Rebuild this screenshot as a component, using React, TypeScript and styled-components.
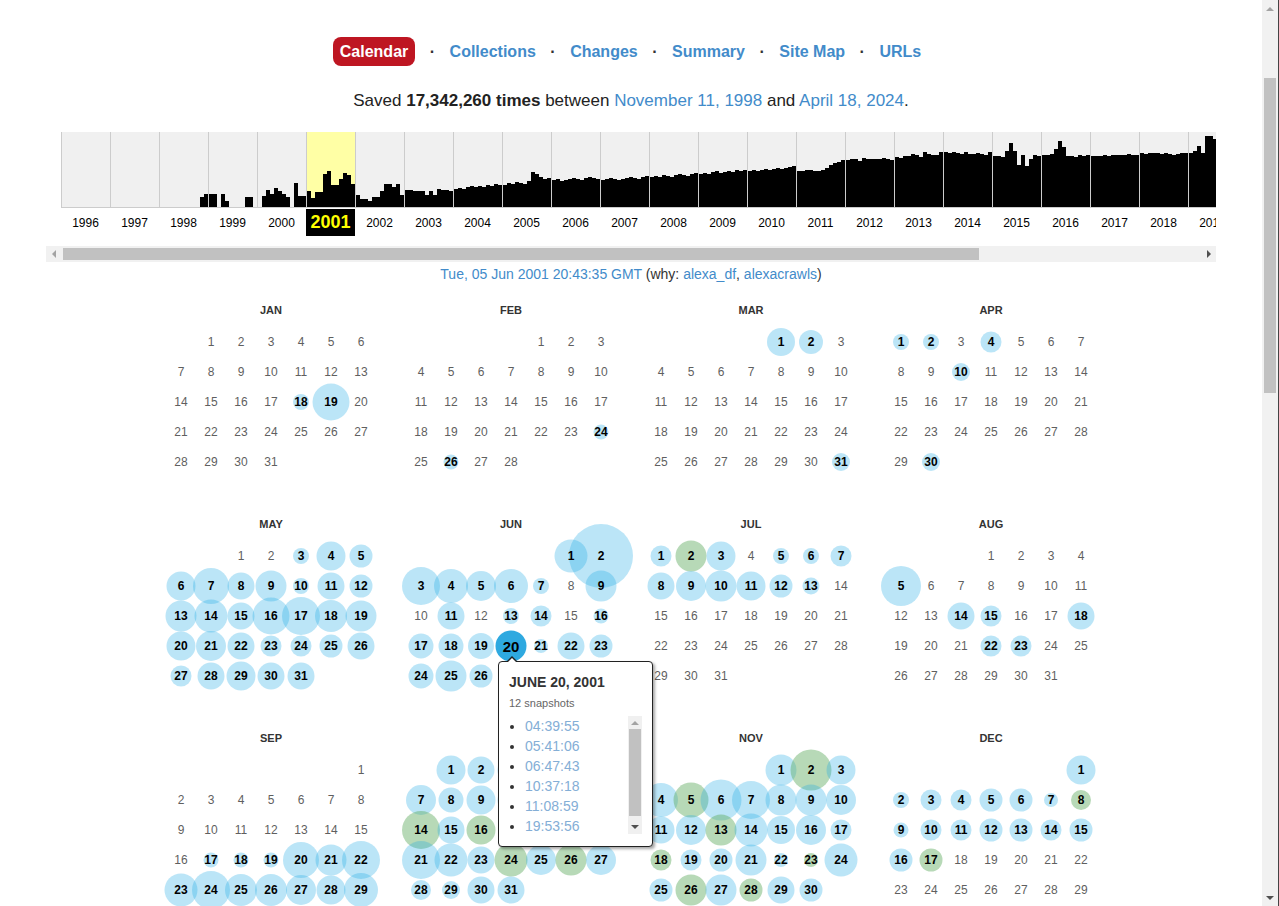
import React from "react";
import styled, { createGlobalStyle } from "styled-components";

const GlobalStyle = createGlobalStyle`
  body {
    margin: 0;
    background: #fff;
    color: #222;
    font-family: "Liberation Sans", Arial, sans-serif;
  }
`;

const BLUE = "#428bca";

// monthly capture heights per year, 1996 onwards
const spark: number[][] = [
  [0, 0, 0, 0, 0, 0, 0, 0, 0, 0, 0, 0],
  [0, 0, 0, 0, 0, 0, 0, 0, 0, 0, 0, 0],
  [0, 0, 0, 0, 0, 0, 0, 0, 0, 0, 10, 13],
  [13, 13, 0, 13, 6, 0, 0, 0, 0, 10, 10, 0],
  [0, 11, 17, 13, 19, 16, 13, 10, 0, 24, 11, 11],
  [16, 9, 15, 15, 33, 36, 22, 22, 28, 34, 32, 23],
  [12, 8, 8, 6, 10, 10, 16, 23, 23, 20, 23, 12],
  [17, 17, 16, 16, 16, 12, 16, 12, 18, 17, 17, 16],
  [18, 19, 18, 20, 21, 20, 21, 20, 22, 21, 23, 22],
  [22, 24, 23, 25, 24, 23, 26, 35, 33, 30, 28, 29],
  [27, 28, 26, 27, 28, 29, 28, 27, 29, 30, 29, 28],
  [27, 28, 29, 28, 27, 28, 29, 30, 29, 28, 30, 31],
  [30, 31, 30, 32, 31, 30, 32, 33, 32, 31, 33, 34],
  [33, 34, 33, 35, 36, 34, 35, 36, 35, 37, 36, 37],
  [36, 37, 36, 37, 38, 37, 38, 39, 38, 39, 40, 41],
  [36, 36, 37, 37, 36, 36, 37, 39, 42, 44, 45, 47],
  [47, 48, 48, 46, 49, 48, 48, 48, 48, 49, 48, 47],
  [50, 49, 51, 51, 53, 52, 50, 55, 53, 52, 52, 55],
  [55, 54, 55, 54, 53, 55, 53, 53, 54, 53, 52, 55],
  [51, 51, 50, 56, 64, 56, 42, 52, 41, 48, 52, 51],
  [52, 52, 53, 58, 66, 60, 51, 51, 50, 52, 51, 52],
  [51, 51, 51, 52, 51, 52, 52, 52, 52, 53, 52, 52],
  [54, 53, 54, 54, 54, 53, 54, 53, 52, 53, 54, 54],
  [54, 56, 61, 54, 71, 71, 68, 60, 58, 59, 57, 58],
  [60, 61, 62, 60, 61, 62, 63, 62, 61, 60, 62, 63],
  [62, 63, 62, 61, 63, 64, 62, 63, 64, 62, 63, 62],
  [61, 62, 63, 62, 61, 62, 63, 64, 62, 63, 61, 62],
  [62, 63, 64, 63, 62, 63, 64, 63, 62, 63, 64, 63],
  [63, 64, 62, 63, 0, 0, 0, 0, 0, 0, 0, 0],
];

type Cap = [number, number, boolean?];

const captures: Cap[][] = [
  [[18, 16], [19, 37]],
  [[24, 15], [26, 15]],
  [[1, 28], [2, 24], [31, 18]],
  [[1, 16], [2, 16], [4, 21], [10, 18], [30, 18]],
  [
    [3, 16], [4, 29], [5, 23], [6, 29], [7, 36], [8, 27], [9, 31], [10, 16], [11, 27], [12, 23],
    [13, 31], [14, 33], [15, 27], [16, 37], [17, 38], [18, 32], [19, 31], [20, 29], [21, 30],
    [22, 27], [23, 21], [24, 21], [25, 23], [26, 27], [27, 21], [28, 27], [29, 29], [30, 27], [31, 27],
  ],
  [
    [1, 33], [2, 64], [3, 38], [4, 34], [5, 30], [6, 34], [7, 16], [9, 31], [11, 27], [13, 16],
    [14, 21], [16, 15], [17, 25], [18, 25], [19, 26], [20, 31], [21, 14], [22, 27], [23, 23],
    [24, 25], [25, 31], [26, 23], [27, 25], [28, 21], [29, 23], [30, 25],
  ],
  [
    [1, 21], [2, 31, true], [3, 29], [5, 16], [6, 16], [7, 21], [8, 27], [9, 30], [10, 31],
    [11, 29], [12, 23], [13, 17],
  ],
  [[5, 40], [14, 27], [15, 21], [18, 27], [22, 21], [23, 21]],
  [
    [17, 15], [18, 15], [19, 15], [20, 36], [21, 31], [22, 38], [23, 33], [24, 38], [25, 32],
    [26, 32], [27, 30], [28, 29], [29, 34], [30, 27],
  ],
  [
    [1, 29], [2, 27], [3, 27], [4, 25], [5, 27], [6, 23], [7, 30], [8, 25], [9, 29], [10, 27],
    [11, 25], [12, 27], [13, 23], [14, 38, true], [15, 27], [16, 29, true], [17, 25], [18, 27],
    [19, 23], [20, 25], [21, 38], [22, 33], [23, 27], [24, 33, true], [25, 30], [26, 31, true],
    [27, 30], [28, 20], [29, 18], [30, 27], [31, 27],
  ],
  [
    [1, 31], [2, 41, true], [3, 29], [4, 34], [5, 35, true], [6, 41], [7, 38], [8, 31], [9, 31],
    [10, 30], [11, 27], [12, 30], [13, 31, true], [14, 33], [15, 28], [16, 30], [17, 21],
    [18, 21, true], [19, 21], [20, 23], [21, 31], [22, 14], [23, 14, true], [24, 33], [25, 23],
    [26, 31, true], [27, 31], [28, 23, true], [29, 27], [30, 23],
  ],
  [
    [1, 29], [2, 16], [3, 21], [4, 21], [5, 23], [6, 23], [7, 14], [8, 20, true], [9, 15],
    [10, 21], [11, 21], [12, 23], [13, 23], [14, 21], [15, 23], [16, 23], [17, 23, true],
  ],
];

const monthNames = ["JAN", "FEB", "MAR", "APR", "MAY", "JUN", "JUL", "AUG", "SEP", "OCT", "NOV", "DEC"];
const navItems = ["Collections", "Changes", "Summary", "Site Map", "URLs"];
const times = ["04:39:55", "05:41:06", "06:47:43", "10:37:18", "11:08:59", "19:53:56", "20:43:35"];

const Tooltip: React.FC = () => (
  <Popup>
    <PopupTitle>JUNE 20, 2001</PopupTitle>
    <PopupCount>12 snapshots</PopupCount>
    <PopupBody>
      <TimeList>
        {times.map((t) => (
          <li key={t}>
            <a>{t}</a>
          </li>
        ))}
      </TimeList>
      <MiniScroll>
        <MiniArrow $up />
        <MiniThumb />
        <MiniArrow />
      </MiniScroll>
    </PopupBody>
  </Popup>
);

const Month: React.FC<{ index: number }> = ({ index }) => {
  const first = new Date(2001, index, 1).getDay();
  const days = new Date(2001, index + 1, 0).getDate();
  const caps = new Map(captures[index].map((c) => [c[0], c]));
  const cells: React.ReactNode[] = [];
  for (let i = 0; i < first; i++) cells.push(<DayCell key={`e${i}`} />);
  for (let d = 1; d <= days; d++) {
    const cap = caps.get(d);
    const selected = index === 5 && d === 20;
    cells.push(
      <DayCell key={d}>
        {cap && <Bubble $size={cap[1]} $green={!!cap[2]} $selected={selected} />}
        <DayNum $active={!!cap} $selected={selected}>
          {d}
        </DayNum>
        {selected && <Tooltip />}
      </DayCell>
    );
  }
  return (
    <MonthBox>
      <MonthTitle>{monthNames[index]}</MonthTitle>
      <DayGrid>{cells}</DayGrid>
    </MonthBox>
  );
};

const App: React.FC = () => {
  return (
    <>
      <GlobalStyle />
      <Window>
        <Page>
          <Nav>
            <ActiveTab>Calendar</ActiveTab>
            {navItems.map((item) => (
              <React.Fragment key={item}>
                <Dot>·</Dot>
                <NavLink>{item}</NavLink>
              </React.Fragment>
            ))}
          </Nav>
          <SavedLine>
            Saved <b>17,342,260 times</b> between <Link>November 11, 1998</Link> and{" "}
            <Link>April 18, 2024</Link>.
          </SavedLine>

          <Sparkline>
            <SparkInner>
              {spark.map((months, i) => {
                const year = 1996 + i;
                const current = year === 2001;
                return (
                  <YearCol key={year}>
                    <YearGraph $current={current}>
                      {months.map((h, m) => (
                        <Bar key={m} style={{ height: h }} />
                      ))}
                    </YearGraph>
                    <YearLabel $current={current}>{year}</YearLabel>
                  </YearCol>
                );
              })}
            </SparkInner>
          </Sparkline>
          <HScroll>
            <HArrow>
              <TriLeft />
            </HArrow>
            <HThumb />
            <HSpacer />
            <HArrow>
              <TriRight />
            </HArrow>
          </HScroll>

          <Stamp>
            <Link>Tue, 05 Jun 2001 20:43:35 GMT</Link> (why: <Link>alexa_df</Link>,{" "}
            <Link>alexacrawls</Link>)
          </Stamp>

          <Calendar>
            {monthNames.map((_, i) => (
              <Month key={i} index={i} />
            ))}
          </Calendar>
        </Page>
        <PageRail>
          <RailArrow>
            <TriUp />
          </RailArrow>
          <RailThumb />
          <RailSpacer />
          <RailArrow>
            <TriDown />
          </RailArrow>
        </PageRail>
      </Window>
    </>
  );
};

export default App;

const Window = styled.div`
  display: flex;
  align-items: flex-start;
  width: 1279px;
`;

const Page = styled.div`
  width: 1262px;
  display: flex;
  flex-direction: column;
  align-items: center;
  padding: 37px 0 40px;
`;

const PageRail = styled.div`
  position: sticky;
  top: 0;
  width: 17px;
  height: 906px;
  display: flex;
  flex-direction: column;
  align-items: center;
  background: #f1f1f1;
  border-right: 1px solid #444;
  box-sizing: border-box;
`;

const RailArrow = styled.div`
  height: 17px;
  width: 100%;
  display: flex;
  align-items: center;
  justify-content: center;
`;

const TriUp = styled.div`
  border-left: 4px solid transparent;
  border-right: 4px solid transparent;
  border-bottom: 4px solid #a3a3a3;
`;

const TriDown = styled.div`
  border-left: 4px solid transparent;
  border-right: 4px solid transparent;
  border-top: 4px solid #505050;
`;

const RailThumb = styled.div`
  width: 12px;
  height: 315px;
  margin-top: 61px;
  margin-right: 1px;
  background: #c1c1c1;
`;

const RailSpacer = styled.div`
  flex: 1;
`;

const Nav = styled.nav`
  display: flex;
  align-items: center;
  gap: 14.5px;
  height: 29px;
  margin-right: 8px;
  font-size: 16px;
  font-weight: bold;
`;

const ActiveTab = styled.span`
  display: inline-flex;
  align-items: center;
  height: 29px;
  padding: 0 7px;
  border-radius: 8px;
  background: #be1622;
  color: #fff;
`;

const Dot = styled.span`
  color: #333;
  font-weight: bold;
`;

const NavLink = styled.a`
  color: ${BLUE};
  cursor: pointer;
`;

const SavedLine = styled.p`
  margin: 25px 0 0;
  font-size: 17px;
  line-height: 20px;
  color: #222;

  b {
    color: #222;
  }
`;

const Link = styled.a`
  color: ${BLUE};
  cursor: pointer;
`;

const Sparkline = styled.div`
  width: 1170px;
  margin-top: 21px;
  overflow: hidden;
`;

const SparkInner = styled.div`
  display: flex;
  padding-left: 15px;
  width: max-content;
`;

const YearCol = styled.div`
  width: 49px;
  display: flex;
  flex-direction: column;
`;

const YearGraph = styled.div<{ $current: boolean }>`
  height: 75px;
  display: flex;
  align-items: flex-end;
  background: ${(p) => (p.$current ? "#ffffa5" : "#f0f0f0")};
  border-left: 1px solid #ccc;
  border-bottom: 1px solid #ccc;
  box-sizing: content-box;
`;

const Bar = styled.div`
  flex: 1;
  background: #000;
`;

const YearLabel = styled.div<{ $current: boolean }>`
  height: 27px;
  margin-top: 1px;
  display: flex;
  align-items: center;
  justify-content: center;
  font-size: ${(p) => (p.$current ? "18px" : "12px")};
  font-weight: ${(p) => (p.$current ? "bold" : "normal")};
  color: ${(p) => (p.$current ? "#ff0" : "#000")};
  background: ${(p) => (p.$current ? "#000" : "transparent")};
`;

const HScroll = styled.div`
  width: 1170px;
  height: 16px;
  margin-top: 10px;
  display: flex;
  align-items: center;
  background: #f1f1f1;
`;

const HArrow = styled.div`
  width: 15px;
  height: 16px;
  display: flex;
  align-items: center;
  justify-content: center;
`;

const TriLeft = styled.div`
  border-top: 4px solid transparent;
  border-bottom: 4px solid transparent;
  border-right: 4px solid #a3a3a3;
`;

const TriRight = styled.div`
  border-top: 4px solid transparent;
  border-bottom: 4px solid transparent;
  border-left: 4px solid #505050;
`;

const HThumb = styled.div`
  width: 916px;
  height: 12px;
  margin-left: 2px;
  background: #c1c1c1;
`;

const HSpacer = styled.div`
  flex: 1;
`;

const Stamp = styled.div`
  margin-top: 4px;
  font-size: 14px;
  line-height: 16px;
  color: #333;
`;

const Calendar = styled.div`
  display: grid;
  grid-template-columns: repeat(4, 210px);
  column-gap: 30px;
  row-gap: 9px;
  margin-top: 20px;
`;

const MonthBox = styled.div`
  height: 205px;
`;

const MonthTitle = styled.div`
  height: 16px;
  line-height: 16px;
  margin-bottom: 9px;
  text-align: center;
  font-size: 11px;
  font-weight: bold;
  color: #333;
`;

const DayGrid = styled.div`
  display: grid;
  grid-template-columns: repeat(7, 30px);
  grid-auto-rows: 30px;
`;

const DayCell = styled.div`
  position: relative;
  display: flex;
  align-items: center;
  justify-content: center;
`;

const Bubble = styled.div<{ $size: number; $green: boolean; $selected: boolean }>`
  position: absolute;
  left: 50%;
  top: 50%;
  width: ${(p) => p.$size}px;
  height: ${(p) => p.$size}px;
  transform: translate(-50%, -50%);
  border-radius: 50%;
  background: ${(p) =>
    p.$selected ? "#2ea9e0" : p.$green ? "rgba(95, 170, 95, 0.45)" : "rgba(30, 170, 230, 0.3)"};
`;

const DayNum = styled.span<{ $active: boolean; $selected: boolean }>`
  position: relative;
  z-index: 1;
  font-size: ${(p) => (p.$selected ? "15px" : "12px")};
  font-weight: ${(p) => (p.$active ? "bold" : "normal")};
  color: ${(p) => (p.$active ? "#000" : "#5f5f5f")};
`;

const Popup = styled.div`
  position: absolute;
  left: 2px;
  top: 30px;
  z-index: 10;
  width: 133px;
  height: 173px;
  padding: 11px 10px 0;
  background: #fff;
  border: 1px solid #222;
  border-radius: 4px;
  box-shadow: 2px 2px 3px rgba(0, 0, 0, 0.35);
  text-align: left;

  &::before {
    content: "";
    position: absolute;
    left: 7px;
    top: -6px;
    border-left: 6px solid transparent;
    border-right: 6px solid transparent;
    border-bottom: 6px solid #222;
  }

  &::after {
    content: "";
    position: absolute;
    left: 8px;
    top: -4px;
    border-left: 5px solid transparent;
    border-right: 5px solid transparent;
    border-bottom: 5px solid #fff;
  }
`;

const PopupTitle = styled.div`
  font-size: 14px;
  font-weight: bold;
  line-height: 18px;
  color: #333;
`;

const PopupCount = styled.div`
  margin-top: 5px;
  font-size: 11px;
  line-height: 14px;
  color: #666;
`;

const PopupBody = styled.div`
  display: flex;
  margin-top: 6px;
  height: 120px;
`;

const TimeList = styled.ul`
  flex: 1;
  margin: 0;
  padding: 0 0 0 16px;
  height: 120px;
  overflow: hidden;
  color: #333;
  font-size: 14px;

  li {
    height: 20px;
    line-height: 20px;
  }

  a {
    color: #84aed6;
    cursor: pointer;
  }
`;

const MiniScroll = styled.div`
  width: 14px;
  height: 118px;
  display: flex;
  flex-direction: column;
  align-items: center;
  background: #f0f0f0;
`;

const MiniArrow = styled.div<{ $up?: boolean }>`
  margin: ${(p) => (p.$up ? "5px 0 4px" : "auto 0 5px")};
  border-left: 4px solid transparent;
  border-right: 4px solid transparent;
  ${(p) => (p.$up ? "border-bottom: 4px solid #a3a3a3;" : "border-top: 4px solid #505050;")}
`;

const MiniThumb = styled.div`
  width: 12px;
  height: 87px;
  background: #c1c1c1;
`;
